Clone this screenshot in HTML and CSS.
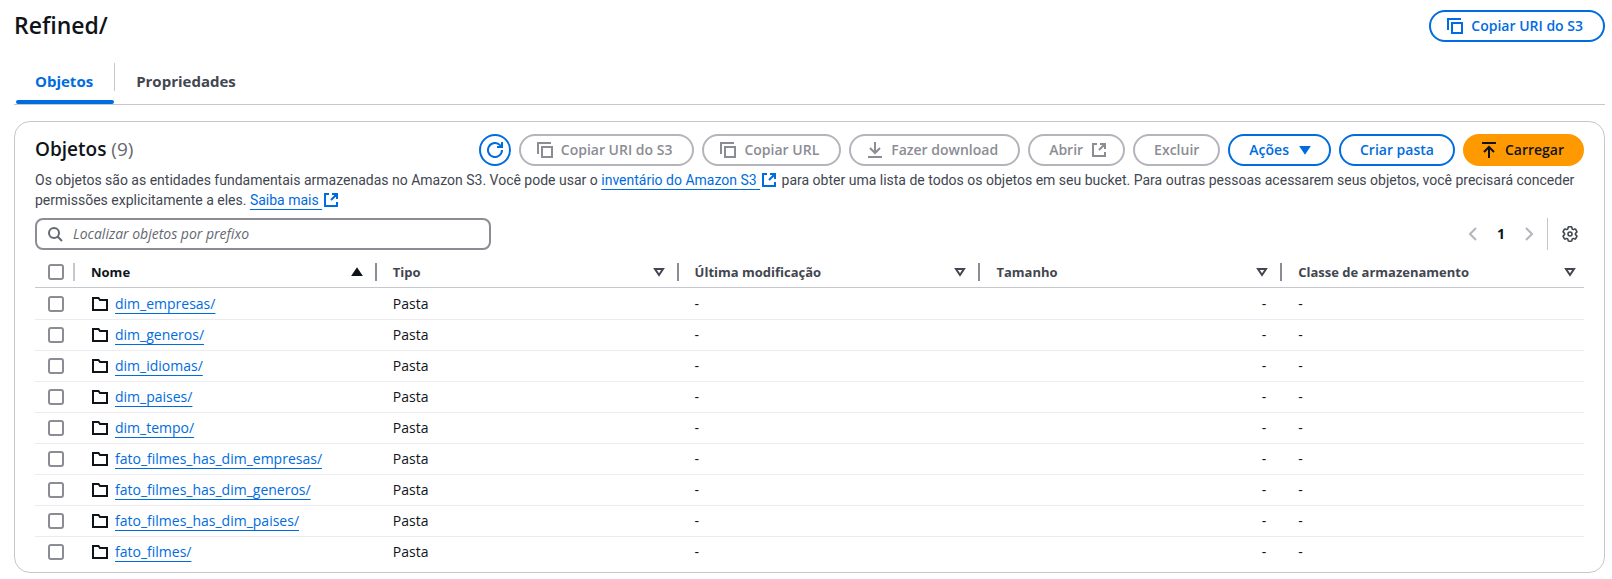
FILE: index.html
```
<!DOCTYPE html>
<html lang="pt-BR">
<head>
<meta charset="utf-8">
<title>Refined/</title>
<link rel="stylesheet" href="styles.css">
</head>
<body>
<svg class="sprite" aria-hidden="true">
  <symbol id="copy" viewBox="0 0 16 16"><path d="M1 12V1h13M5 5h10v10H5z"/></symbol>
  <symbol id="refresh" viewBox="0 0 16 16"><path d="M15 8a7 7 0 1 1-2-4.900l2 1.900M10 5h5V0"/></symbol>
  <symbol id="download" viewBox="0 0 16 16"><path d="M8 0v11M3 6l5 5 5-5M1 15h14"/></symbol>
  <symbol id="upload" viewBox="0 0 16 16"><path d="M1 1h14M8 16V5M3 10l5-5 5 5"/></symbol>
  <symbol id="external" viewBox="0 0 16 16"><path d="M6 2H2v12h12v-4M9 2h5v5M14 2 8 8"/></symbol>
  <symbol id="folder" viewBox="0 0 16 16"><path d="M1 14V2h5.500l1.500 2h7v10z"/></symbol>
  <symbol id="search" viewBox="0 0 16 16"><circle cx="7" cy="7" r="5"/><path d="m10.500 10.500 4.500 4.500"/></symbol>
  <symbol id="prev" viewBox="0 0 16 16"><path d="M11 2 5 8l6 6"/></symbol>
  <symbol id="next" viewBox="0 0 16 16"><path d="m5 2 6 6-6 6"/></symbol>
  <symbol id="caret" viewBox="0 0 16 16"><path class="solid" d="M4 5h8l-4 6z"/></symbol>
  <symbol id="asc" viewBox="0 0 16 16"><path class="solid" d="m8 5 4 6H4z"/></symbol>
  <symbol id="sort" viewBox="0 0 16 16"><path d="M4 5h8l-4 6z"/></symbol>
  <symbol id="gear" viewBox="2 2 20 20"><path d="M9.594 3.940c.090-.542.560-.940 1.110-.940h2.593c.550 0 1.020.398 1.110.940l.213 1.281c.063.374.313.686.645.870.074.040.147.083.220.127.325.196.720.257 1.075.124l1.217-.456a1.125 1.125 0 0 1 1.370.490l1.296 2.247a1.125 1.125 0 0 1-.260 1.431l-1.003.827c-.293.241-.438.613-.430.992a7.723 7.723 0 0 1 0 .255c-.008.378.137.750.430.991l1.004.827c.424.350.534.955.260 1.430l-1.298 2.247a1.125 1.125 0 0 1-1.369.491l-1.217-.456c-.355-.133-.750-.072-1.076.124a6.470 6.470 0 0 1-.220.128c-.331.183-.581.495-.644.869l-.213 1.281c-.090.543-.560.940-1.110.940h-2.594c-.550 0-1.019-.398-1.110-.940l-.213-1.281c-.062-.374-.312-.686-.644-.870a6.520 6.520 0 0 1-.220-.127c-.325-.196-.720-.257-1.076-.124l-1.217.456a1.125 1.125 0 0 1-1.369-.490l-1.297-2.247a1.125 1.125 0 0 1 .260-1.431l1.004-.827c.292-.240.437-.613.430-.991a6.932 6.932 0 0 1 0-.255c.007-.380-.138-.751-.430-.992l-1.004-.827a1.125 1.125 0 0 1-.260-1.430l1.297-2.247a1.125 1.125 0 0 1 1.370-.491l1.216.456c.356.133.751.072 1.076-.124.072-.044.146-.086.220-.128.332-.183.582-.495.644-.869z"/><circle cx="12" cy="12" r="2.500"/></symbol>
</svg>

<header class="page-header">
  <h1>Refined/</h1>
  <button class="btn" type="button"><svg class="icon"><use href="#copy"/></svg>Copiar URI do S3</button>
</header>

<div class="tabs" role="tablist">
  <button class="tab active" type="button" role="tab" aria-selected="true">Objetos</button>
  <button class="tab" type="button" role="tab" aria-selected="false">Propriedades</button>
</div>

<main class="panel">
  <div class="panel-header">
    <h2>Objetos <span class="count">(9)</span></h2>
    <div class="actions">
      <button class="btn round" type="button" aria-label="Atualizar"><svg class="icon"><use href="#refresh"/></svg></button>
      <button class="btn" type="button" disabled><svg class="icon"><use href="#copy"/></svg>Copiar URI do S3</button>
      <button class="btn" type="button" disabled><svg class="icon"><use href="#copy"/></svg>Copiar URL</button>
      <button class="btn" type="button" disabled><svg class="icon"><use href="#download"/></svg>Fazer download</button>
      <button class="btn icon-end" type="button" disabled>Abrir<svg class="icon"><use href="#external"/></svg></button>
      <button class="btn plain" type="button" disabled>Excluir</button>
      <button class="btn icon-end" type="button">Ações<svg class="icon"><use href="#caret"/></svg></button>
      <button class="btn plain" type="button">Criar pasta</button>
      <button class="btn primary" type="button"><svg class="icon"><use href="#upload"/></svg>Carregar</button>
    </div>
  </div>
  <p class="description">Os objetos são as entidades fundamentais armazenadas no Amazon S3. Você pode usar o <a href="#inventario">inventário do Amazon S3&nbsp;<svg class="icon"><use href="#external"/></svg></a> para obter uma lista de todos os objetos em seu bucket. Para outras pessoas acessarem seus objetos, você precisará conceder permissões explicitamente a eles. <a href="#saiba-mais">Saiba mais&nbsp;<svg class="icon"><use href="#external"/></svg></a></p>

  <div class="tools">
    <label class="search">
      <svg class="icon"><use href="#search"/></svg>
      <input type="text" placeholder="Localizar objetos por prefixo" aria-label="Localizar objetos por prefixo">
    </label>
    <div class="pager">
      <button class="step" type="button" aria-label="Página anterior" disabled><svg class="icon"><use href="#prev"/></svg></button>
      <button class="page" type="button" aria-current="page">1</button>
      <button class="step" type="button" aria-label="Próxima página" disabled><svg class="icon"><use href="#next"/></svg></button>
      <span class="rule"></span>
      <button class="settings" type="button" aria-label="Preferências"><svg class="icon"><use href="#gear"/></svg></button>
    </div>
  </div>

  <table>
    <thead>
      <tr>
        <th class="select" scope="col"><div class="head"><input type="checkbox" aria-label="Selecionar todos"></div></th>
        <th class="sorted" scope="col" aria-sort="ascending"><div class="head">Nome<svg class="icon"><use href="#asc"/></svg></div></th>
        <th scope="col"><div class="head">Tipo<svg class="icon"><use href="#sort"/></svg></div></th>
        <th scope="col"><div class="head">Última modificação<svg class="icon"><use href="#sort"/></svg></div></th>
        <th scope="col"><div class="head">Tamanho<svg class="icon"><use href="#sort"/></svg></div></th>
        <th scope="col"><div class="head">Classe de armazenamento<svg class="icon"><use href="#sort"/></svg></div></th>
      </tr>
    </thead>
    <tbody>
      <tr><td class="select"><input type="checkbox" aria-label="dim_empresas/"></td><td><div class="name"><svg class="icon"><use href="#folder"/></svg><a href="#dim_empresas">dim_empresas/</a></div></td><td>Pasta</td><td>-</td><td class="size">-</td><td>-</td></tr>
      <tr><td class="select"><input type="checkbox" aria-label="dim_generos/"></td><td><div class="name"><svg class="icon"><use href="#folder"/></svg><a href="#dim_generos">dim_generos/</a></div></td><td>Pasta</td><td>-</td><td class="size">-</td><td>-</td></tr>
      <tr><td class="select"><input type="checkbox" aria-label="dim_idiomas/"></td><td><div class="name"><svg class="icon"><use href="#folder"/></svg><a href="#dim_idiomas">dim_idiomas/</a></div></td><td>Pasta</td><td>-</td><td class="size">-</td><td>-</td></tr>
      <tr><td class="select"><input type="checkbox" aria-label="dim_paises/"></td><td><div class="name"><svg class="icon"><use href="#folder"/></svg><a href="#dim_paises">dim_paises/</a></div></td><td>Pasta</td><td>-</td><td class="size">-</td><td>-</td></tr>
      <tr><td class="select"><input type="checkbox" aria-label="dim_tempo/"></td><td><div class="name"><svg class="icon"><use href="#folder"/></svg><a href="#dim_tempo">dim_tempo/</a></div></td><td>Pasta</td><td>-</td><td class="size">-</td><td>-</td></tr>
      <tr><td class="select"><input type="checkbox" aria-label="fato_filmes_has_dim_empresas/"></td><td><div class="name"><svg class="icon"><use href="#folder"/></svg><a href="#fato_filmes_has_dim_empresas">fato_filmes_has_dim_empresas/</a></div></td><td>Pasta</td><td>-</td><td class="size">-</td><td>-</td></tr>
      <tr><td class="select"><input type="checkbox" aria-label="fato_filmes_has_dim_generos/"></td><td><div class="name"><svg class="icon"><use href="#folder"/></svg><a href="#fato_filmes_has_dim_generos">fato_filmes_has_dim_generos/</a></div></td><td>Pasta</td><td>-</td><td class="size">-</td><td>-</td></tr>
      <tr><td class="select"><input type="checkbox" aria-label="fato_filmes_has_dim_paises/"></td><td><div class="name"><svg class="icon"><use href="#folder"/></svg><a href="#fato_filmes_has_dim_paises">fato_filmes_has_dim_paises/</a></div></td><td>Pasta</td><td>-</td><td class="size">-</td><td>-</td></tr>
      <tr><td class="select"><input type="checkbox" aria-label="fato_filmes/"></td><td><div class="name"><svg class="icon"><use href="#folder"/></svg><a href="#fato_filmes">fato_filmes/</a></div></td><td>Pasta</td><td>-</td><td class="size">-</td><td>-</td></tr>
    </tbody>
  </table>
</main>
</body>
</html>
```
FILE: styles.css
```
* { box-sizing: border-box; }

body {
  margin: 0;
  padding: 10px 7px 5px 14px;
  background: #fff;
  color: #0f141a;
  font: 14px/20px "Open Sans", "Noto Sans", sans-serif;
}

h1, h2, p { margin: 0; }

button {
  font: inherit;
  cursor: pointer;
}

a {
  color: #006ce0;
  text-decoration: underline 1px;
  text-underline-offset: 4px;
  text-decoration-skip-ink: none;
}

.sprite {
  position: absolute;
  width: 0;
  height: 0;
}

.icon {
  width: 16px;
  height: 16px;
  flex: none;
  fill: none;
  stroke: currentColor;
  stroke-width: 2px;
}

.solid {
  fill: currentColor;
}

/* Page header */

.page-header {
  display: flex;
  align-items: center;
  justify-content: space-between;
}

h1 {
  padding-bottom: 2px;
  font-size: 23px;
  line-height: 30px;
  font-weight: 600;
}

.btn {
  display: flex;
  align-items: center;
  gap: 8px;
  height: 32px;
  padding: 0 20px 0 16px;
  border: 2px solid #006ce0;
  border-radius: 16px;
  background: #fff;
  color: #006ce0;
  font-weight: 600;
  white-space: nowrap;
}

.btn.icon-end { padding: 0 16px 0 19px; }
.btn.plain { padding: 0 19px; }

.btn.round {
  width: 32px;
  padding: 0;
  justify-content: center;
}

.btn:disabled {
  border-color: #b4b4bb;
  color: #8c8c94;
}

.btn.primary {
  padding-right: 18px;
  border-color: #ff9900;
  background: #ff9900;
  color: #0f141a;
}

/* Tabs */

.tabs {
  display: flex;
  align-items: flex-end;
  margin-top: 21px;
  border-bottom: 1px solid #c6c6cd;
}

.tab {
  position: relative;
  padding: 8px 22px 12px 21px;
  border: 0;
  background: none;
  color: #424650;
  font-size: 15px;
  line-height: 21px;
  font-weight: 700;
}

.tab.active { color: #006ce0; }

.tab.active::before {
  content: "";
  position: absolute;
  top: 0;
  right: 0;
  width: 1px;
  height: 28px;
  background: #c6c6cd;
}

.tab.active::after {
  content: "";
  position: absolute;
  right: 1px;
  bottom: 0;
  left: 2px;
  height: 4px;
  border-radius: 4px;
  background: #006ce0;
}

/* Objects panel */

.panel {
  margin-top: 16px;
  padding: 12px 20px 4px;
  border: 1px solid #c6c6cd;
  border-radius: 16px;
}

.panel-header {
  display: flex;
  align-items: center;
  justify-content: space-between;
}

h2 {
  padding-bottom: 2px;
  font-size: 19px;
  line-height: 24px;
  font-weight: 600;
}

.count {
  color: #656871;
  font-weight: 400;
}

.actions {
  display: flex;
  gap: 8px;
}

.description {
  margin-top: 4px;
  color: #424650;
  font-family: Roboto, sans-serif;
}

.description .icon {
  margin: 0 1px;
  vertical-align: -3px;
}

.tools {
  display: flex;
  justify-content: space-between;
  margin-top: 8px;
}

.search {
  display: flex;
  align-items: center;
  gap: 10px;
  width: 456px;
  height: 32px;
  padding: 0 10px;
  border: 2px solid #8c8c94;
  border-radius: 8px;
  color: #656871;
}

.search input {
  flex: 1;
  min-width: 0;
  padding: 0;
  border: 0;
  outline: 0;
  background: none;
  color: #0f141a;
  font: inherit;
}

.search input::placeholder {
  color: #656871;
  font-style: italic;
  opacity: 1;
}

.pager {
  display: flex;
  align-items: center;
}

.pager button {
  display: flex;
  align-items: center;
  justify-content: center;
  width: 28px;
  height: 32px;
  padding: 0;
  border: 0;
  background: none;
  color: #424650;
}

.pager .step { color: #b4b4bb; }

.pager .page {
  color: #0f141a;
  font-weight: 700;
}

.rule {
  width: 1px;
  height: 32px;
  margin: 0 8px 0 4px;
  background: #c6c6cd;
}

/* Table */

table {
  width: 100%;
  margin-top: 7px;
  border-collapse: separate;
  border-spacing: 0;
  table-layout: fixed;
}

th, td {
  height: 31px;
  padding: 0 16px;
  border-bottom: 1px solid #ebebf0;
  text-align: left;
}

th {
  padding-right: 0;
  border-bottom-color: #c6c6cd;
  color: #424650;
  font-size: 13px;
  line-height: 18px;
  font-weight: 700;
}

tbody tr:first-child td { height: 32px; }
tbody tr:last-child td { border-bottom-color: transparent; }

th.sorted { color: #0f141a; }
.size { text-align: right; }

.head {
  display: flex;
  align-items: center;
  justify-content: space-between;
  height: 18px;
  padding-right: 10px;
  border-right: 2px solid #8c8c94;
}

th:last-child .head {
  padding-right: 6px;
  border-right: 0;
}

th.select, td.select {
  width: 40px;
  padding: 0 0 0 13px;
}

.select .head { border-right-color: #c6c6cd; }

td.select + td { padding-left: 17px; }

input[type="checkbox"] {
  display: block;
  flex: none;
  appearance: none;
  width: 16px;
  height: 16px;
  margin: 0;
  border: 2px solid #8c8c94;
  border-radius: 3px;
  background: #fff;
}

.name {
  display: flex;
  align-items: center;
  gap: 7px;
}
```
